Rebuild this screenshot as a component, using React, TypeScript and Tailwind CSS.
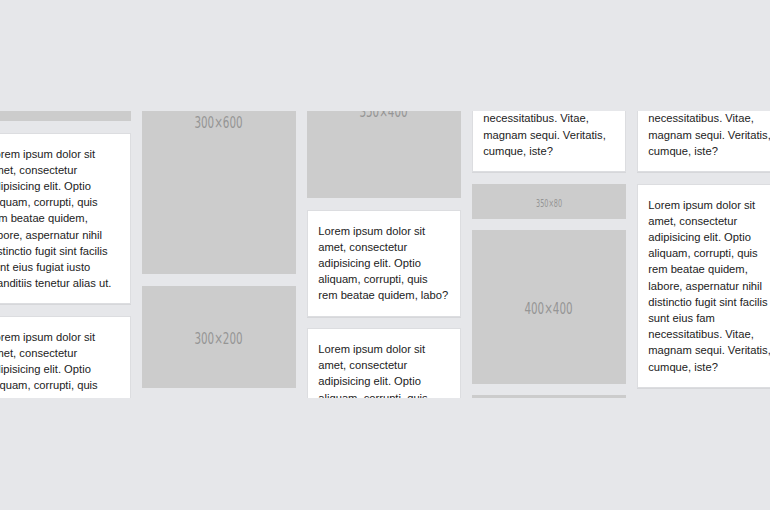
const longText = [
  "Lorem ipsum dolor sit",
  "amet, consectetur",
  "adipisicing elit. Optio",
  "aliquam, corrupti, quis",
  "rem beatae quidem,",
  "labore, aspernatur nihil",
  "distinctio fugit sint facilis",
  "sunt eius fam",
  "necessitatibus. Vitae,",
  "magnam sequi. Veritatis,",
  "cumque, iste?",
];

const fugiatText = [
  "Lorem ipsum dolor sit",
  "amet, consectetur",
  "adipisicing elit. Optio",
  "aliquam, corrupti, quis",
  "rem beatae quidem,",
  "labore, aspernatur nihil",
  "distinctio fugit sint facilis",
  "sunt eius fugiat iusto",
  "blanditiis tenetur alias ut.",
];

const shortText = [
  "Lorem ipsum dolor sit",
  "amet, consectetur",
  "adipisicing elit. Optio",
  "aliquam, corrupti, quis",
  "rem beatae quidem, labo?",
];

function Card({ lines }: { lines: string[] }) {
  return (
    <div className="bg-white border border-[#dcdde0] px-[10.25px] py-[12px] text-[11.2px] leading-[16.2px] text-[#222] shadow-[0_1px_0_#d6d7da]">
      {lines.map((line, i) => (
        <span key={i} className="block whitespace-nowrap">
          {line}
        </span>
      ))}
    </div>
  );
}

function Placeholder({
  label,
  heightClass,
  small,
}: {
  label: string;
  heightClass: string;
  small?: boolean;
}) {
  return (
    <div
      className={`${heightClass} bg-[#cccccc] flex items-center justify-center text-[#959595] [font-family:'DejaVu_Sans_Condensed','DejaVu_Sans',sans-serif] ${
        small ? "text-[10px]" : "text-[16px]"
      }`}
    >
      <span className="inline-block scale-x-[0.72] translate-y-[1.5px]">
        {label}
      </span>
    </div>
  );
}

export default function App() {
  return (
    <div className="w-[770px] h-[510px] bg-[#e6e7ea] pt-[111px] [font-family:'Liberation_Sans',Arial,sans-serif]">
      <div className="h-[287px] overflow-hidden">
        <div className="flex gap-[11.5px] ml-[-23px] items-start">
          <div className="w-[153.5px] shrink-0 flex flex-col gap-[11.5px] mt-[-90px]">
            <Placeholder label="300×200" heightClass="h-[100px]" />
            <Card lines={fugiatText} />
            <Card lines={shortText} />
          </div>

          <div className="w-[153.5px] shrink-0 flex flex-col gap-[11.5px] mt-[-144px]">
            <Placeholder label="300×600" heightClass="h-[307px]" />
            <Placeholder label="300×200" heightClass="h-[102.3px]" />
            <Placeholder label="350×150" heightClass="h-[66px]" />
          </div>

          <div className="w-[153.5px] shrink-0 flex flex-col gap-[11.5px] mt-[-88.4px]">
            <Placeholder label="350×400" heightClass="h-[175.4px]" />
            <Card lines={shortText} />
            <Card lines={shortText} />
          </div>

          <div className="w-[153.5px] shrink-0 flex flex-col gap-[11.5px] mt-[-143.2px]">
            <Card lines={longText} />
            <Placeholder label="350×80" heightClass="h-[35.1px]" small />
            <Placeholder label="400×400" heightClass="h-[153.5px]" />
            <Placeholder label="300×200" heightClass="h-[102.3px]" />
          </div>

          <div className="w-[153.5px] shrink-0 flex flex-col gap-[11.5px] mt-[-143.2px]">
            <Card lines={longText} />
            <Card lines={longText} />
          </div>
        </div>
      </div>
    </div>
  );
}
